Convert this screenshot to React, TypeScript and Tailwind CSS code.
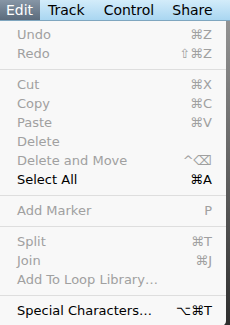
import React from "react";

type Item =
  | { sep: true }
  | { label: string; sc?: string; enabled?: boolean; sep?: false };

const items: Item[] = [
  { label: "Undo", sc: "⌘Z" },
  { label: "Redo", sc: "⇧⌘Z" },
  { sep: true },
  { label: "Cut", sc: "⌘X" },
  { label: "Copy", sc: "⌘C" },
  { label: "Paste", sc: "⌘V" },
  { label: "Delete" },
  { label: "Delete and Move", sc: "^⌫" },
  { label: "Select All", sc: "⌘A", enabled: true },
  { sep: true },
  { label: "Add Marker", sc: "P" },
  { sep: true },
  { label: "Split", sc: "⌘T" },
  { label: "Join", sc: "⌘J" },
  { label: "Add To Loop Library…" },
  { sep: true },
  { label: "Special Characters…", sc: "⌥⌘T", enabled: true },
];

export default function App() {
  return (
    <div
      className="w-[230px] h-[325px] overflow-hidden flex flex-col bg-[linear-gradient(to_bottom,#9a9a9a,#2e2e2e)]"
      style={{ fontFamily: '"Lucida Grande", "DejaVu Sans", sans-serif' }}
    >
      <div className="h-[21px] flex items-stretch text-[14px] text-black bg-[linear-gradient(to_bottom,#d3ecfa,#a9d6f1)] border-b border-[#7fa6bf] shrink-0">
        <div className="w-[40px] flex items-center pl-[6px] text-white bg-[linear-gradient(to_bottom,#8796a6,#5b6b7c)]">
          Edit
        </div>
        <div className="flex items-center pl-[8px]">Track</div>
        <div className="flex items-center pl-[19px]">Control</div>
        <div className="flex items-center pl-[18px]">Share</div>
      </div>
      <div className="w-[226px] bg-[#f8f8f8] rounded-br-[5px] pt-[4px] pb-[6px] flex flex-col text-[13px] leading-none">
        {items.map((it, i) =>
          it.sep ? (
            <div key={i} className="h-[12px] flex items-center">
              <div className="w-full h-px bg-[#dedede]" />
            </div>
          ) : (
            <div
              key={i}
              className={`h-[19px] flex items-center justify-between pl-[17px] pr-[14px] ${
                it.enabled ? "text-black" : "text-[#a0a0a0]"
              }`}
            >
              <span>{it.label}</span>
              {it.sc && <span>{it.sc}</span>}
            </div>
          )
        )}
      </div>
    </div>
  );
}
